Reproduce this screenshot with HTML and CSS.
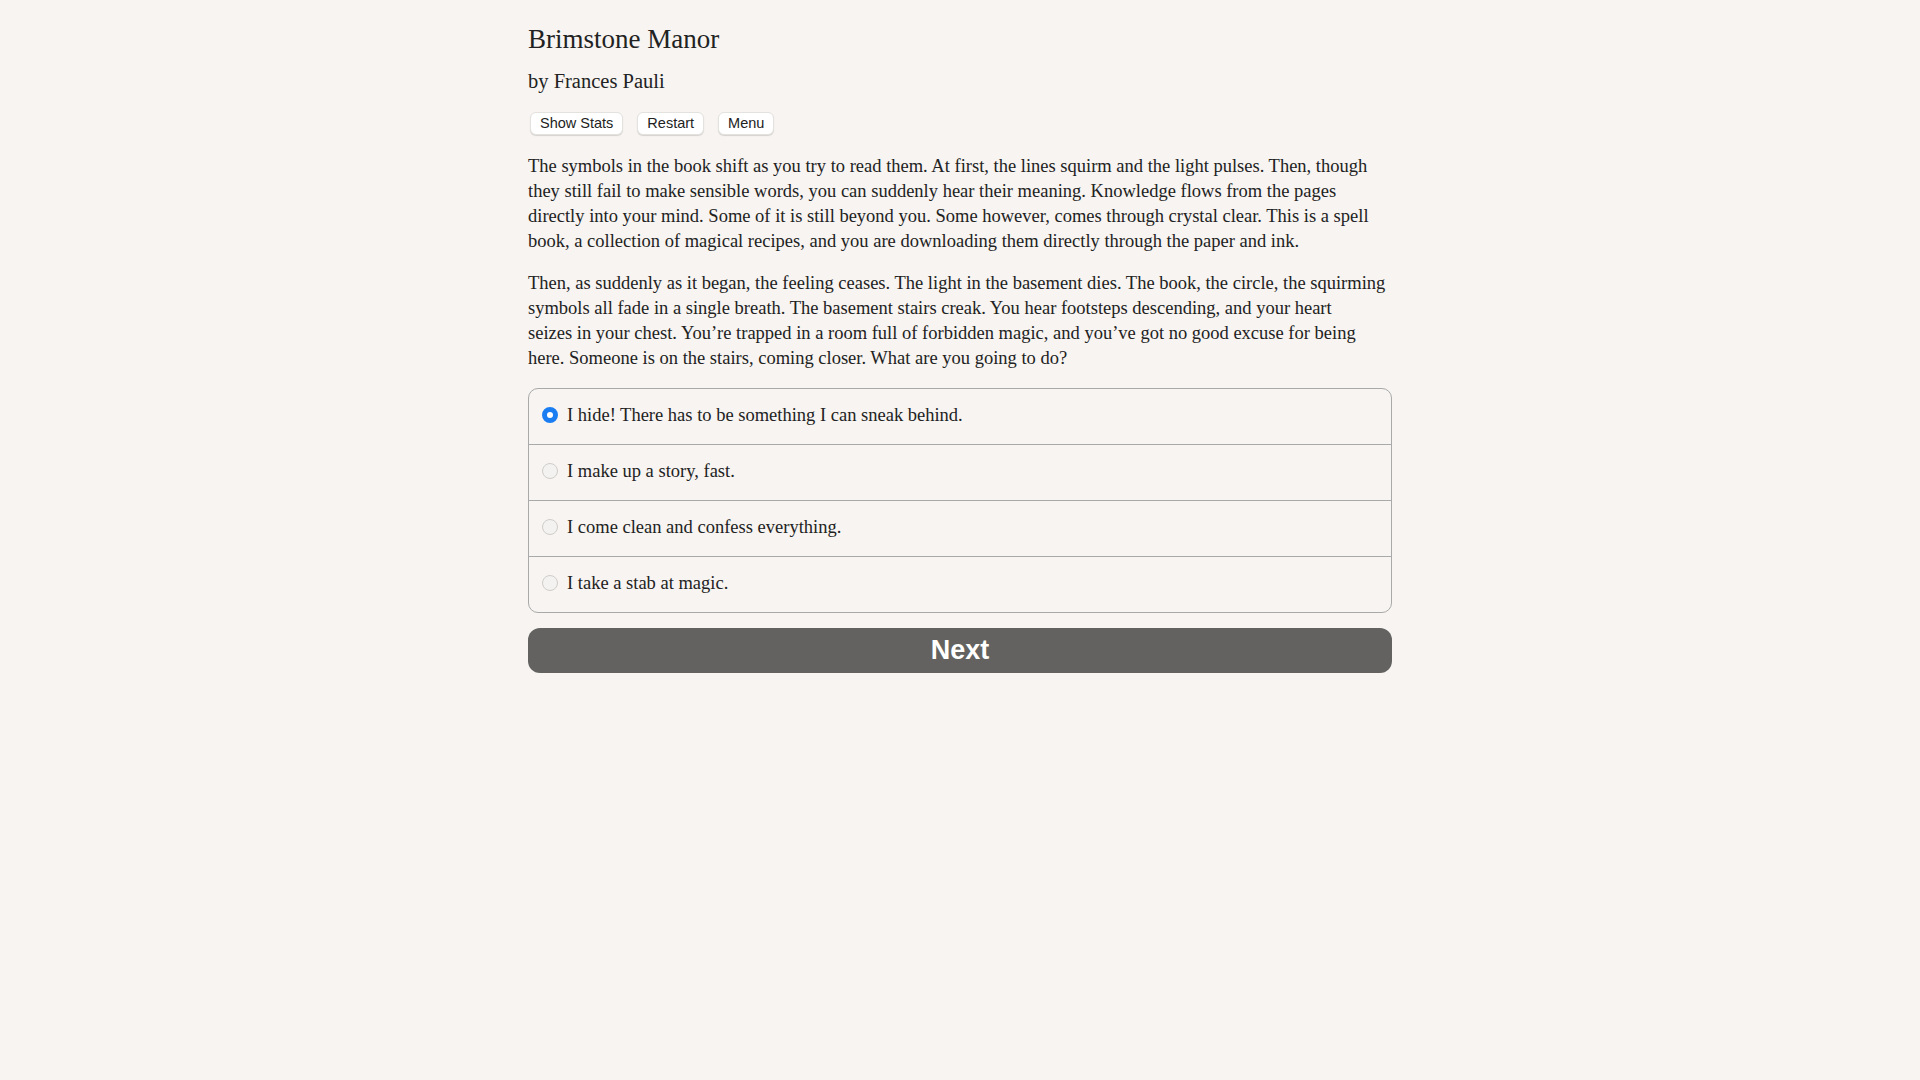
FILE: index.html
```html
<!DOCTYPE html>
<html lang="en">
<head>
<meta charset="utf-8">
<title>Brimstone Manor</title>
<link rel="stylesheet" href="styles.css">
</head>
<body>
<main class="page">
  <div class="title">Brimstone Manor</div>
  <div class="byline">by Frances Pauli</div>
  <div class="toolbar">
    <button class="tool">Show Stats</button>
    <button class="tool">Restart</button>
    <button class="tool">Menu</button>
  </div>
  <div class="story">
    <p>The symbols in the book shift as you try to read them. At first, the lines squirm and the light pulses. Then, though they still fail to make sensible words, you can suddenly hear their meaning. Knowledge flows from the pages directly into your mind. Some of it is still beyond you. Some however, comes through crystal clear. This is a spell book, a collection of magical recipes, and you are downloading them directly through the paper and ink.</p>
    <p>Then, as suddenly as it began, the feeling ceases. The light in the basement dies. The book, the circle, the squirming symbols all fade in a single breath. The basement stairs creak. You hear footsteps descending, and your heart<br>seizes in your chest. You’re trapped in a room full of forbidden magic, and you’ve got no good excuse for being here. Someone is on the stairs, coming closer. What are you going to do?</p>
  </div>
  <div class="choices">
    <label class="choice"><span class="radio checked"></span><span class="choice-text">I hide! There has to be something I can sneak behind.</span></label>
    <label class="choice"><span class="radio"></span><span class="choice-text">I make up a story, fast.</span></label>
    <label class="choice"><span class="radio"></span><span class="choice-text">I come clean and confess everything.</span></label>
    <label class="choice"><span class="radio"></span><span class="choice-text">I take a stab at magic.</span></label>
  </div>
  <button class="next">Next</button>
</main>
</body>
</html>
```
FILE: styles.css
```css
html, body {
  margin: 0;
  padding: 0;
  background: #f7f4f1;
}
body {
  font-family: "Liberation Serif", "Times New Roman", serif;
  color: #222;
}
.page {
  width: 864px;
  margin: 0 auto;
  padding-top: 23px;
}
.title {
  font-size: 27px;
  line-height: 32px;
}
.byline {
  margin-top: 14px;
  font-size: 20.5px;
  line-height: 24px;
}
.toolbar {
  display: flex;
  gap: 14px;
  margin-top: 18.5px;
  padding-left: 2px;
}
.tool {
  font-family: "Liberation Sans", Arial, sans-serif;
  font-size: 14.5px;
  line-height: 21px;
  height: 23px;
  padding: 0 9px;
  background: #fff;
  color: #222;
  border: 1px solid #e4e2df;
  border-radius: 6px;
  box-shadow: 0 1px 1px rgba(0,0,0,0.14);
}
.story {
  margin-top: 19px;
  font-size: 18.5px;
  line-height: 25px;
}
.story p {
  margin: 0 0 17px;
}
.story p:last-child {
  margin-bottom: 0;
}
.choices {
  margin-top: 17px;
  border: 1px solid #a9a9a9;
  border-radius: 10px;
  display: flex;
  flex-direction: column;
}
.choice {
  display: flex;
  align-items: center;
  gap: 9px;
  height: 55px;
  box-sizing: border-box;
  padding: 0 0 2px 13px;
  font-size: 18.5px;
}
.choice + .choice {
  height: 56px;
  border-top: 1px solid #a9a9a9;
}
.radio {
  width: 16px;
  height: 16px;
  box-sizing: border-box;
  border-radius: 50%;
  border: 1px solid #cfcdca;
  background: #f3f2f0;
  flex: none;
}
.radio.checked {
  border: 5px solid #1a7ef2;
  background: #fff;
}
.next {
  display: block;
  width: 100%;
  height: 45px;
  margin-top: 15px;
  background: #636260;
  color: #fff;
  border: none;
  border-radius: 12px;
  font-family: "Liberation Sans", Arial, sans-serif;
  font-weight: bold;
  font-size: 27px;
}
```
